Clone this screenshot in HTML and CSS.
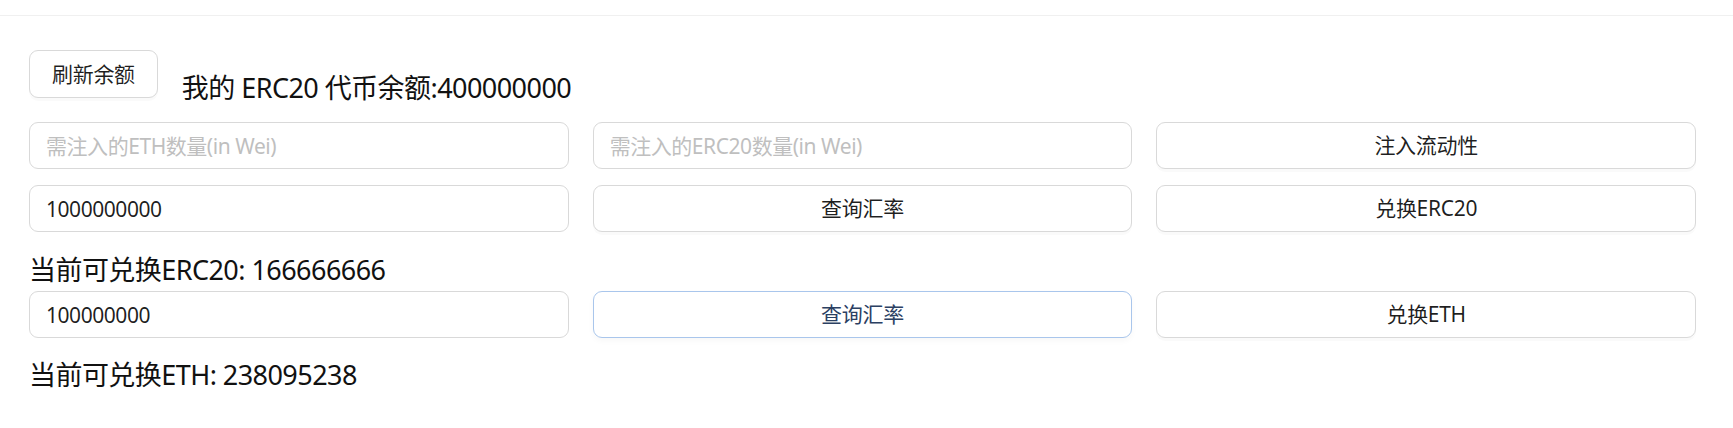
FILE: index.html
```html
<!DOCTYPE html>
<html lang="zh-CN">
<head>
<meta charset="utf-8">
<title>ERC20 Swap</title>
<link rel="stylesheet" href="styles.css">
</head>
<body>
<div class="topbar"></div>
<main class="main">
  <div class="balance-row">
    <button class="btn btn-refresh">刷新余额</button>
    <span class="big-text balance">我的 ERC20 代币余额:400000000</span>
  </div>
  <div class="grid row1">
    <input class="input" placeholder="需注入的ETH数量(in Wei)">
    <input class="input" placeholder="需注入的ERC20数量(in Wei)">
    <button class="btn">注入流动性</button>
  </div>
  <div class="grid row2">
    <input class="input" value="1000000000">
    <button class="btn">查询汇率</button>
    <button class="btn">兑换ERC20</button>
  </div>
  <div class="big-text result">当前可兑换ERC20: 166666666</div>
  <div class="grid row3">
    <input class="input" value="100000000">
    <button class="btn btn-focus">查询汇率</button>
    <button class="btn">兑换ETH</button>
  </div>
  <div class="big-text result result-eth">当前可兑换ETH: 238095238</div>
</main>
</body>
</html>
```
FILE: styles.css
```css
* { box-sizing: border-box; }
body {
  margin: 0;
  background: #ffffff;
  font-family: "Noto Sans", "Noto Sans CJK SC", sans-serif;
  color: rgba(0, 0, 0, 0.88);
}
.topbar {
  height: 16px;
  border-bottom: 1px solid #f0f0f0;
}
.main {
  width: 1733px;
  padding: 0 37px 0 29px;
}
.balance-row {
  display: flex;
  align-items: flex-start;
  margin-top: 34px;
}
.btn {
  height: 47px;
  padding: 0 22px;
  border: 1.5px solid #d9d9d9;
  border-radius: 9px;
  background: #ffffff;
  box-shadow: 0 3px 0 rgba(0, 0, 0, 0.02);
  font-family: "Noto Sans", "Noto Sans CJK SC", sans-serif;
  font-size: 21px;
  letter-spacing: -0.3px;
  color: rgba(0, 0, 0, 0.88);
  line-height: 1;
  cursor: pointer;
}
.btn-refresh {
  height: 48px;
}
.btn-focus {
  border-color: #a9c6ec;
  color: #2b4062;
  box-shadow: 0 3px 6px rgba(0, 0, 0, 0.03);
}
.big-text {
  font-size: 27px;
  line-height: 40px;
  letter-spacing: -0.55px;
  color: #111111;
}
.balance {
  margin-left: 24px;
  margin-top: 18px;
}
.grid {
  display: grid;
  grid-template-columns: repeat(3, 1fr);
  column-gap: 24px;
}
.row1 { margin-top: 14px; }
.row2 { margin-top: 16px; }
.row3 { margin-top: 1px; }
.result { margin-top: 18px; }
.result-eth { margin-top: 17px; }
.input {
  height: 47px;
  width: 100%;
  padding: 0 16px;
  border: 1.5px solid #d9d9d9;
  border-radius: 9px;
  background: #ffffff;
  font-family: "Noto Sans", "Noto Sans CJK SC", sans-serif;
  font-size: 21px;
  letter-spacing: -0.45px;
  color: rgba(0, 0, 0, 0.88);
  outline: none;
}
.input::placeholder {
  color: #bfbfbf;
}
```
